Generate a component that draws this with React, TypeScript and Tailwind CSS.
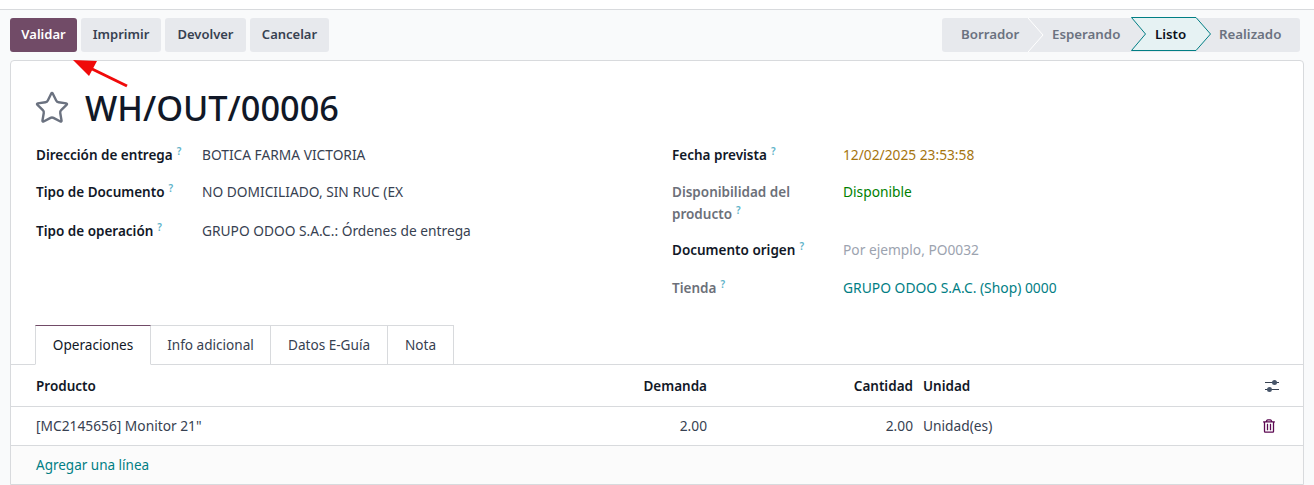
import { Star } from 'lucide-react';
import { FaRegTrashAlt } from 'react-icons/fa';

const FONT = "[font-family:'Noto_Sans','Open_Sans',sans-serif]";

function Help() {
  return <sup className="ml-1 -top-[5px] text-[10px] font-semibold text-[#5fb3c9]">?</sup>;
}

function Label({ text, muted }: { text: string; muted?: boolean }) {
  return (
    <span className={`text-[13.5px] font-semibold ${muted ? 'text-[#6c7079]' : 'text-[#111827]'}`}>
      {text}
      <Help />
    </span>
  );
}

function ActionButton({ text, width, primary }: { text: string; width: string; primary?: boolean }) {
  return (
    <button
      className={`h-[34px] rounded-[3px] text-[13px] font-semibold ${width} ${
        primary ? 'bg-[#714b67] text-white' : 'bg-[#e7e9ed] text-[#374151]'
      }`}
    >
      {text}
    </button>
  );
}

function StatusBar() {
  return (
    <div className="relative flex h-[34px] w-[358px] items-center rounded-[3px] bg-[#e7e9ed] text-[13.3px] font-semibold text-[#6b7280]">
      <div className="w-[86px] pl-[19px]">Borrador</div>
      <div className="w-[103px] pl-[24px]">Esperando</div>
      <div className="relative w-[65px] pl-[24px] text-[#0b0f1a]">
        <svg className="absolute top-[-8.5px] left-0" width="80" height="34" viewBox="0 0 80 34">
          <path d="M0.5 0.5H65L79.5 17L65 33.5H0.5L14.5 17Z" fill="#e6f2f3" stroke="#017e84" />
        </svg>
        <span className="relative">Listo</span>
      </div>
      <div className="w-[104px] pl-[23px]">Realizado</div>
      <svg className="absolute top-0 left-[86px]" width="16" height="34" viewBox="0 0 16 34">
        <path d="M0 0L15 17L0 34" fill="none" stroke="#ffffff" />
      </svg>
    </div>
  );
}

function Tab({ text, width, active }: { text: string; width: string; active?: boolean }) {
  return (
    <div
      className={`-mr-px flex h-[40px] items-center justify-center border border-[#d8dadd] pt-[1px] text-[13.6px] ${width} ${
        active ? 'relative z-10 border-t-[#714b67] border-b-white bg-white text-[#111827]' : 'text-[#374151]'
      }`}
    >
      {text}
    </div>
  );
}

export default function App() {
  return (
    <div className={`relative h-[485px] w-[1314px] overflow-hidden bg-[#f9fafb] text-[13.75px] text-[#374151] ${FONT}`}>
      <div className="h-[10px] border-b border-[#d8dadd] bg-white" />

      {/* Action bar */}
      <div className="flex h-[50px] items-start justify-between pt-2 pr-[14px] pl-[10px]">
        <div className="flex gap-1">
          <ActionButton text="Validar" width="w-[67px]" primary />
          <ActionButton text="Imprimir" width="w-[80px]" />
          <ActionButton text="Devolver" width="w-[81px]" />
          <ActionButton text="Cancelar" width="w-[79px]" />
        </div>
        <StatusBar />
      </div>

      {/* Sheet */}
      <div className="mr-[10px] ml-[10px] h-[425px] rounded-t-[4px] border border-[#d8dadd] bg-white">
        <div className="flex items-center pt-[24px] pl-[23px]">
          <Star className="h-[36px] w-[36px] text-[#6b7280]" strokeWidth={1.6} />
          <h1 className="ml-[15px] text-[34.3px] leading-[46px] font-medium text-[#111827]">WH/OUT/00006</h1>
        </div>

        <div className="mt-[6px] grid grid-cols-[636px_1fr] pl-[25px]">
          <div className="flex flex-col">
            <div className="flex h-[37px] items-center">
              <div className="w-[166px]"><Label text="Dirección de entrega" /></div>
              <span>BOTICA FARMA VICTORIA</span>
            </div>
            <div className="flex h-[37px] items-center">
              <div className="w-[166px]"><Label text="Tipo de Documento" /></div>
              <span>NO DOMICILIADO, SIN RUC (EX</span>
            </div>
            <div className="flex h-[41px] items-center">
              <div className="w-[166px]"><Label text="Tipo de operación" /></div>
              <span>GRUPO ODOO S.A.C.: Órdenes de entrega</span>
            </div>
          </div>
          <div className="flex flex-col">
            <div className="flex h-[37px] items-center">
              <div className="w-[171px]"><Label text="Fecha prevista" /></div>
              <span className="text-[#a5750f]">12/02/2025 23:53:58</span>
            </div>
            <div className="flex h-[57px] items-start pt-[7px] leading-[22px]">
              <div className="w-[171px] pr-[40px]"><Label text="Disponibilidad del producto" muted /></div>
              <span className="text-[#008000]">Disponible</span>
            </div>
            <div className="flex h-[38px] items-center">
              <div className="w-[171px]"><Label text="Documento origen" /></div>
              <span className="text-[#9ca3af]">Por ejemplo, PO0032</span>
            </div>
            <div className="flex h-[38px] items-center">
              <div className="w-[171px]"><Label text="Tienda" muted /></div>
              <span className="text-[13.85px] text-[#017e84]">GRUPO ODOO S.A.C. (Shop) 0000</span>
            </div>
          </div>
        </div>

        {/* Tabs */}
        <div className="relative mt-[18px] flex pl-[24px] after:absolute after:right-0 after:bottom-0 after:left-0 after:h-px after:bg-[#d8dadd]">
          <Tab text="Operaciones" width="w-[116px]" active />
          <Tab text="Info adicional" width="w-[121px]" />
          <Tab text="Datos E-Guía" width="w-[118px]" />
          <Tab text="Nota" width="w-[67px]" />
        </div>

        {/* Lines */}
        <div className="grid grid-cols-[696px_206px_1fr_58px]">
          <div className="flex h-[42px] items-center justify-between border-b border-[#d8dadd] pt-[2px] pl-[25px] text-[13.5px] font-semibold text-[#111827]">
            <span>Producto</span>
            <span>Demanda</span>
          </div>
          <div className="flex h-[42px] items-center justify-end border-b border-[#d8dadd] pt-[2px] text-[13.5px] font-semibold text-[#111827]">Cantidad</div>
          <div className="flex h-[42px] items-center border-b border-[#d8dadd] pt-[2px] pl-[10px] text-[13.5px] font-semibold text-[#111827]">Unidad</div>
          <div className="flex h-[42px] items-center justify-center border-b border-[#d8dadd] pr-[4px]">
            <svg width="16" height="14" viewBox="0 0 16 14" fill="none">
              <path d="M1 3.5H15M1 10.5H15" stroke="#374151" strokeWidth="1" />
              <circle cx="10.5" cy="3.5" r="2.5" fill="#475569" />
              <circle cx="5.5" cy="10.5" r="2.5" fill="#475569" />
            </svg>
          </div>

          <div className="flex h-[39px] items-center justify-between border-b border-[#d8dadd] pl-[25px]">
            <span>[MC2145656] Monitor 21"</span>
            <span>2.00</span>
          </div>
          <div className="flex h-[39px] items-center justify-end border-b border-[#d8dadd]">2.00</div>
          <div className="flex h-[39px] items-center border-b border-[#d8dadd] pl-[10px]">Unidad(es)</div>
          <div className="flex h-[39px] items-center justify-center border-b border-[#d8dadd] pr-[10px]">
            <FaRegTrashAlt className="h-[14px] w-[12px] text-[#5c0a52]" />
          </div>
        </div>
        <div className="flex h-[39px] items-center border-b border-[#d8dadd] bg-[#fbfbfb] pl-[25px] text-[13.5px] text-[#017e84]">Agregar una línea</div>
      </div>

      {/* Annotation arrow */}
      <svg className="absolute top-[58px] left-[70px]" width="60" height="30" viewBox="0 0 60 30">
        <path d="M57 28L18 9" stroke="#f00a0a" strokeWidth="3" />
        <path d="M3 2L27 3L19 18Z" fill="#f00a0a" />
      </svg>
    </div>
  );
}
